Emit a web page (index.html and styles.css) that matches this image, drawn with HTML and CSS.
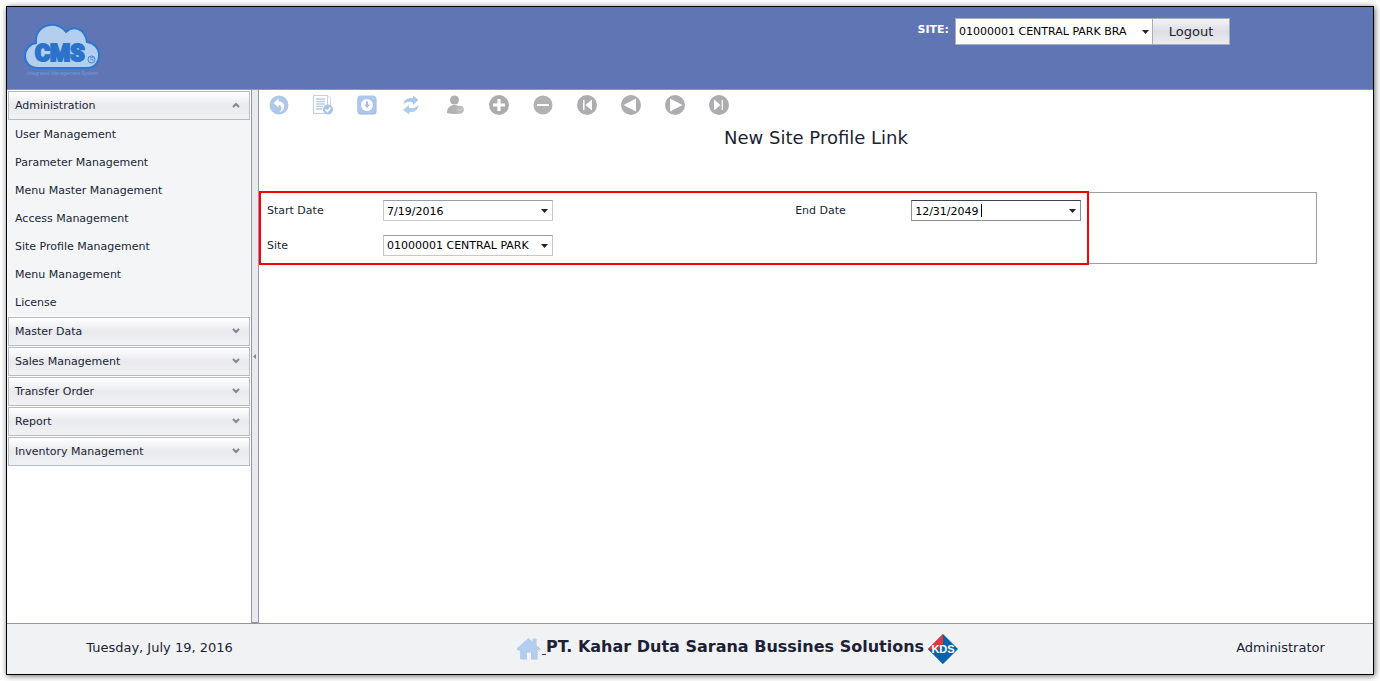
FILE: index.html
```html
<!DOCTYPE html>
<html lang="en">
<head>
<meta charset="utf-8">
<title>New Site Profile Link</title>
<link rel="stylesheet" href="styles.css">
</head>
<body>
<div class="window">
  <header class="header">
    <svg class="logo" width="80" height="54" viewBox="0 0 80 54" role="img" aria-label="CMS">
      <path d="M14 45C5 45 1 39 1 33C1 26 6 21 12 20C11 10 17 3 26 2C33 1 38 4 42 9C49 2 61 5 63 19C70 20 75 25 75 32C75 40 70 45 63 45Z" fill="#b4ceee" stroke="#2a78d0" stroke-width="2"/>
      <text class="logo-name" x="11" y="38">CMS</text>
      <circle cx="67.500" cy="36.500" r="3.500" fill="none" stroke="#3d84d4" stroke-width="1"/>
      <text class="logo-mark" x="66" y="38">R</text>
      <text class="logo-tag" x="3" y="52">Integrated Management System</text>
    </svg>
    <form class="session">
      <label class="session-label" for="branch">SITE:</label>
      <span class="combo combo-large">
        <select id="branch"><option>01000001 CENTRAL PARK BRA</option></select>
        <svg class="arrow" width="7" height="4" viewBox="0 0 7 4"><path d="M0 0H7L3.500 4Z" fill="#201f35"/></svg>
      </span>
      <button class="logout" type="button">Logout</button>
    </form>
  </header>

  <div class="body">
    <nav class="sidebar">
      <button class="group" type="button">Administration<svg width="8" height="6" viewBox="0 0 8 6"><path d="M1 5L4 2L7 5" /></svg></button>
      <div class="items">
        <a href="#">User Management</a>
        <a href="#">Parameter Management</a>
        <a href="#">Menu Master Management</a>
        <a href="#">Access Management</a>
        <a href="#">Site Profile Management</a>
        <a href="#">Menu Management</a>
        <a href="#">License</a>
      </div>
      <button class="group" type="button">Master Data<svg width="8" height="6" viewBox="0 0 8 6"><path d="M1 1L4 4L7 1"/></svg></button>
      <button class="group" type="button">Sales Management<svg width="8" height="6" viewBox="0 0 8 6"><path d="M1 1L4 4L7 1"/></svg></button>
      <button class="group" type="button">Transfer Order<svg width="8" height="6" viewBox="0 0 8 6"><path d="M1 1L4 4L7 1"/></svg></button>
      <button class="group" type="button">Report<svg width="8" height="6" viewBox="0 0 8 6"><path d="M1 1L4 4L7 1"/></svg></button>
      <button class="group" type="button">Inventory Management<svg width="8" height="6" viewBox="0 0 8 6"><path d="M1 1L4 4L7 1"/></svg></button>
    </nav>
    <div class="splitter"><svg width="3" height="5" viewBox="0 0 3 5"><path d="M3 0V5L0 2.500Z" fill="#83858f"/></svg></div>

    <main class="main">
      <div class="toolbar">
        <button type="button" aria-label="Back"><svg width="20" height="20" viewBox="0 0 20 20"><circle cx="10" cy="10" r="9.500" fill="#adc8ea"/><path d="M4.500 8L9.500 3.500V6.300C14 6.500 16.500 10 14.500 14.500C13.500 16 12 17 10.500 17C13 14.500 13.200 10.500 9.500 10V12.500Z" fill="#fff"/></svg></button>
        <button type="button" aria-label="Save"><svg width="20" height="20" viewBox="0 0 20 20"><path d="M3 2H17.500V18.500H3" fill="none" stroke="#c9daee"/><rect x=".5" y=".5" width="14" height="18" fill="#fff" stroke="#bdd2eb"/><path d="M3 4H12M3 6.500H12M3 9H12M3 11.500H10M3 14H9" stroke="#b9cde6" stroke-width="1.300"/><circle cx="15" cy="14.500" r="5" fill="#a9c4e6"/><path d="M12.500 14.500L14.500 16.500L17.500 12.500" fill="none" stroke="#fff" stroke-width="1.600"/></svg></button>
        <button type="button" aria-label="Download"><svg width="20" height="20" viewBox="0 0 20 20"><rect x=".5" y="1.500" width="19" height="18" rx="3" fill="#9fb4cd"/><rect x=".5" y=".5" width="18.500" height="18" rx="3" fill="#abc7eb"/><circle cx="10" cy="10" r="6" fill="#fff"/><path d="M9 6.500H11V9.500H13L10 13L7 9.500H9Z" fill="#9fbfe6"/><circle cx="16" cy="3.500" r=".6" fill="#fff"/></svg></button>
        <button type="button" aria-label="Refresh"><svg width="20" height="20" viewBox="0 0 20 20"><path d="M2.500 9C3 4.500 7 2.500 12 3V.5L17.500 5L12 10V7.500C8.500 6 5.500 7 2.500 9Z" fill="#a9c8ec"/><path d="M17.500 10C17 15.500 13 17.500 8.500 17V19.500L2 15L8 10V12.500C11.500 14 14.500 13 17.500 10Z" fill="#b0ccee"/></svg></button>
        <button type="button" aria-label="User"><svg width="20" height="20" viewBox="0 0 20 20"><circle cx="9.500" cy="5" r="4.500" fill="#aeaeae"/><path d="M2 18C2 13 4.500 11 8 10H11C14.500 11 16.500 13 17.500 18Q10 20 2 18Z" fill="#b1b1b1"/><circle cx="15" cy="14.500" r="3.800" fill="#bcbcbc"/><path d="M13.500 14L15 16L17 13.500" fill="none" stroke="#d4d4d4"/></svg></button>
        <button type="button" aria-label="Add"><svg width="20" height="20" viewBox="0 0 20 20"><circle cx="10" cy="10" r="10" fill="#acacae"/><path d="M10 4V16M4 10H16" stroke="#fff" stroke-width="3.200"/></svg></button>
        <button type="button" aria-label="Remove"><svg width="20" height="20" viewBox="0 0 20 20"><circle cx="10" cy="10" r="9.500" fill="#b2b2b3"/><path d="M4 10H16" stroke="#fff" stroke-width="2"/></svg></button>
        <button type="button" aria-label="First"><svg width="20" height="20" viewBox="0 0 20 20"><circle cx="10" cy="10" r="10" fill="#adadaf"/><path d="M6 5H7.500V15H6ZM8.500 10L15 4.500V15.500Z" fill="#fff"/></svg></button>
        <button type="button" aria-label="Previous"><svg width="20" height="20" viewBox="0 0 20 20"><circle cx="10" cy="10" r="10" fill="#adadaf"/><path d="M2.500 10L15 3.500V16.500Z" fill="#fff"/></svg></button>
        <button type="button" aria-label="Next"><svg width="20" height="20" viewBox="0 0 20 20"><circle cx="10" cy="10" r="10" fill="#adadaf"/><path d="M17.500 10L5 3.500V16.500Z" fill="#fff"/></svg></button>
        <button type="button" aria-label="Last"><svg width="20" height="20" viewBox="0 0 20 20"><circle cx="10" cy="10" r="10" fill="#adadaf"/><path d="M14 5H12.700V15H14ZM11.500 10L5 4.500V15.500Z" fill="#fff"/></svg></button>
      </div>
      <h1 class="title">New Site Profile Link</h1>
      <form class="panel">
        <div class="field">
          <label for="start">Start Date</label>
          <span class="combo">
            <input id="start" type="text" value="7/19/2016">
            <svg class="arrow" width="7" height="4" viewBox="0 0 7 4"><path d="M0 0H7L3.500 4Z" fill="#201f35"/></svg>
          </span>
        </div>
        <div class="field">
          <label for="end">End Date</label>
          <span class="combo combo-active">
            <input id="end" type="text" value="12/31/2049">
            <span class="caret"></span>
            <svg class="arrow" width="7" height="4" viewBox="0 0 7 4"><path d="M0 0H7L3.500 4Z" fill="#201f35"/></svg>
          </span>
        </div>
        <div class="field">
          <label for="site">Site</label>
          <span class="combo">
            <select id="site"><option>01000001 CENTRAL PARK</option></select>
            <svg class="arrow" width="7" height="4" viewBox="0 0 7 4"><path d="M0 0H7L3.500 4Z" fill="#201f35"/></svg>
          </span>
        </div>
        <div class="highlight"></div>
      </form>
    </main>
  </div>

  <footer class="footer">
    <div class="today">Tuesday, July 19, 2016</div>
    <div class="company">
      <a href="#" aria-label="Home"><svg width="26" height="24" viewBox="0 0 26 24"><path d="M2 12L13 2L17 5V2H21V9L25 12L24 14H22V23H15V16H11V23H5V14H2Z" fill="#d7d9dc"/><path d="M1 11L12.500 1L16.500 4.500V1.500H20V8L24 11.500L23 13H21V22H15V15H11V22H4V13H1Z" fill="#b3cdee"/></svg><span class="home-space">&nbsp;</span></a>
      <strong>PT. Kahar Duta Sarana Bussines Solutions</strong>
      <svg class="kds" width="30" height="30" viewBox="0 0 30 30" role="img" aria-label="KDS"><path d="M15 0L30 15L15 30L0 15Z" fill="#0663ae"/><path d="M15 0V10L10 15L0 15Z" fill="#e2373f"/><path d="M0 15H15V30Z" fill="#0663ae"/><text class="kds-name" x="15" y="19">KDS</text></svg>
    </div>
    <div class="user">Administrator</div>
  </footer>
</div>
</body>
</html>
```
FILE: styles.css
```css
* {
  box-sizing: border-box;
}

body {
  margin: 0;
  padding: 6px;
  height: 100vh;
  background: #fff;
  color: #201f35;
  font: 11px/16px "DejaVu Sans", Verdana, sans-serif;
}

button,
input,
select {
  font: inherit;
  color: inherit;
}

.window {
  display: flex;
  flex-direction: column;
  height: 100%;
  border: 1px solid #000;
  box-shadow: 1px 1px 6px rgba(0, 0, 0, 0.6);
}

.header {
  display: flex;
  justify-content: space-between;
  align-items: flex-start;
  padding: 11px 143px 12px 17px;
  border-bottom: 1px solid #9295a5;
  background: #6075b3;
}

.logo {
  margin-top: 5px;
}

.logo-name {
  fill: #2a72cc;
  stroke: #2a72cc;
  stroke-width: 2px;
  font: 900 23px Roboto, "Liberation Sans", sans-serif;
}

.logo-mark {
  fill: #3d84d4;
  font: 5px "Liberation Sans", sans-serif;
}

.logo-tag {
  fill: #6f9fdd;
  font: 5px "Liberation Sans", sans-serif;
}

.session {
  display: flex;
  align-items: flex-start;
}

.session-label {
  margin: 4px 6px 0 0;
  color: #fff;
  font-weight: bold;
}

.combo {
  position: relative;
  display: block;
  width: 170px;
  height: 21px;
  border: 1px solid #c6c8d0;
  border-top-color: #9a9ca8;
  background: #fff;
}

.combo input,
.combo select {
  display: block;
  width: 100%;
  height: 100%;
  padding: 1px 16px 0 3px;
  border: 0;
  outline: 0;
  appearance: none;
  background: transparent;
  color: #000;
}

.combo-large {
  width: 198px;
  height: 27px;
  border-color: #a9acb8;
}

.combo-active {
  border-color: #8a8c9c;
  border-top-color: #3f4150;
}

.arrow {
  position: absolute;
  top: calc(50% - 2px);
  right: 4px;
  pointer-events: none;
}

.combo-large .arrow {
  right: 3px;
}

.caret {
  position: absolute;
  top: 3px;
  left: 69px;
  width: 1px;
  height: 13px;
  background: #000;
}

.logout {
  width: 77px;
  height: 27px;
  padding: 0;
  border: 1px solid #a9acb8;
  border-left: 0;
  background: linear-gradient(#f3f3f6, #dddee5 50%, #ececf0);
  font-size: 13px;
}

.body {
  display: flex;
  flex: 1;
}

.sidebar {
  display: flex;
  flex-direction: column;
  gap: 1px;
  width: 244px;
  padding: 1px;
}

.group {
  display: flex;
  justify-content: space-between;
  align-items: center;
  height: 29px;
  padding: 1px 9px 0 6px;
  border: 1px solid #b7b9c3;
  background: linear-gradient(#fff, #e9eaee 50%, #f1f2f4);
  text-align: left;
}

.group svg {
  margin-bottom: 2px;
  fill: none;
  stroke: #83858f;
  stroke-width: 2px;
}

.items {
  display: flex;
  flex-direction: column;
  margin-top: -1px;
  background: #f3f5f7;
}

.items a {
  padding: 8px 7px 6px;
  line-height: 14px;
  color: #201f35;
  text-decoration: none;
}

.splitter {
  display: flex;
  align-items: center;
  width: 8px;
  padding-left: 1px;
  border: 1px solid #9295a5;
  border-top: 0;
  background: #e9eaef;
}

.main {
  flex: 1;
}

.toolbar {
  display: flex;
  gap: 24px;
  padding: 5px 10px;
}

.toolbar button {
  width: 20px;
  height: 20px;
  padding: 0;
  border: 0;
  background: none;
}

.toolbar svg {
  display: block;
}

.title {
  margin: 6px 0 42px;
  font-size: 18px;
  line-height: 24px;
  font-weight: normal;
  text-align: center;
}

.panel {
  position: relative;
  display: grid;
  grid-template-columns: 1fr 1fr;
  row-gap: 14px;
  width: 95%;
  padding: 7px 1px 7px 0;
  border: 1px solid #9c9eab;
  border-left: 0;
}

.field {
  display: flex;
  align-items: center;
  padding-left: 8px;
}

.field label {
  width: 116px;
  padding-top: 1px;
}

.highlight {
  position: absolute;
  top: -2px;
  left: 0;
  width: 830px;
  bottom: -2px;
  border: 2px solid #f00;
  pointer-events: none;
}

.footer {
  display: grid;
  grid-template-columns: 305px 1fr 185px;
  align-items: center;
  height: 51px;
  border-top: 1px solid #9295a5;
  background: #f0f2f4;
  font-size: 13px;
  text-align: center;
}

.today,
.user {
  padding-bottom: 3px;
}

.company {
  display: flex;
  justify-content: center;
  align-items: center;
  padding-right: 26px;
}

.company a {
  display: flex;
  align-items: center;
  color: #551a8b;
}

.company strong {
  padding-bottom: 5px;
  font-size: 16px;
  line-height: 20px;
}

.kds {
  margin-left: 4px;
}

.kds-name {
  fill: #fff;
  font: bold 11px "Liberation Sans", sans-serif;
  text-anchor: middle;
}
```
